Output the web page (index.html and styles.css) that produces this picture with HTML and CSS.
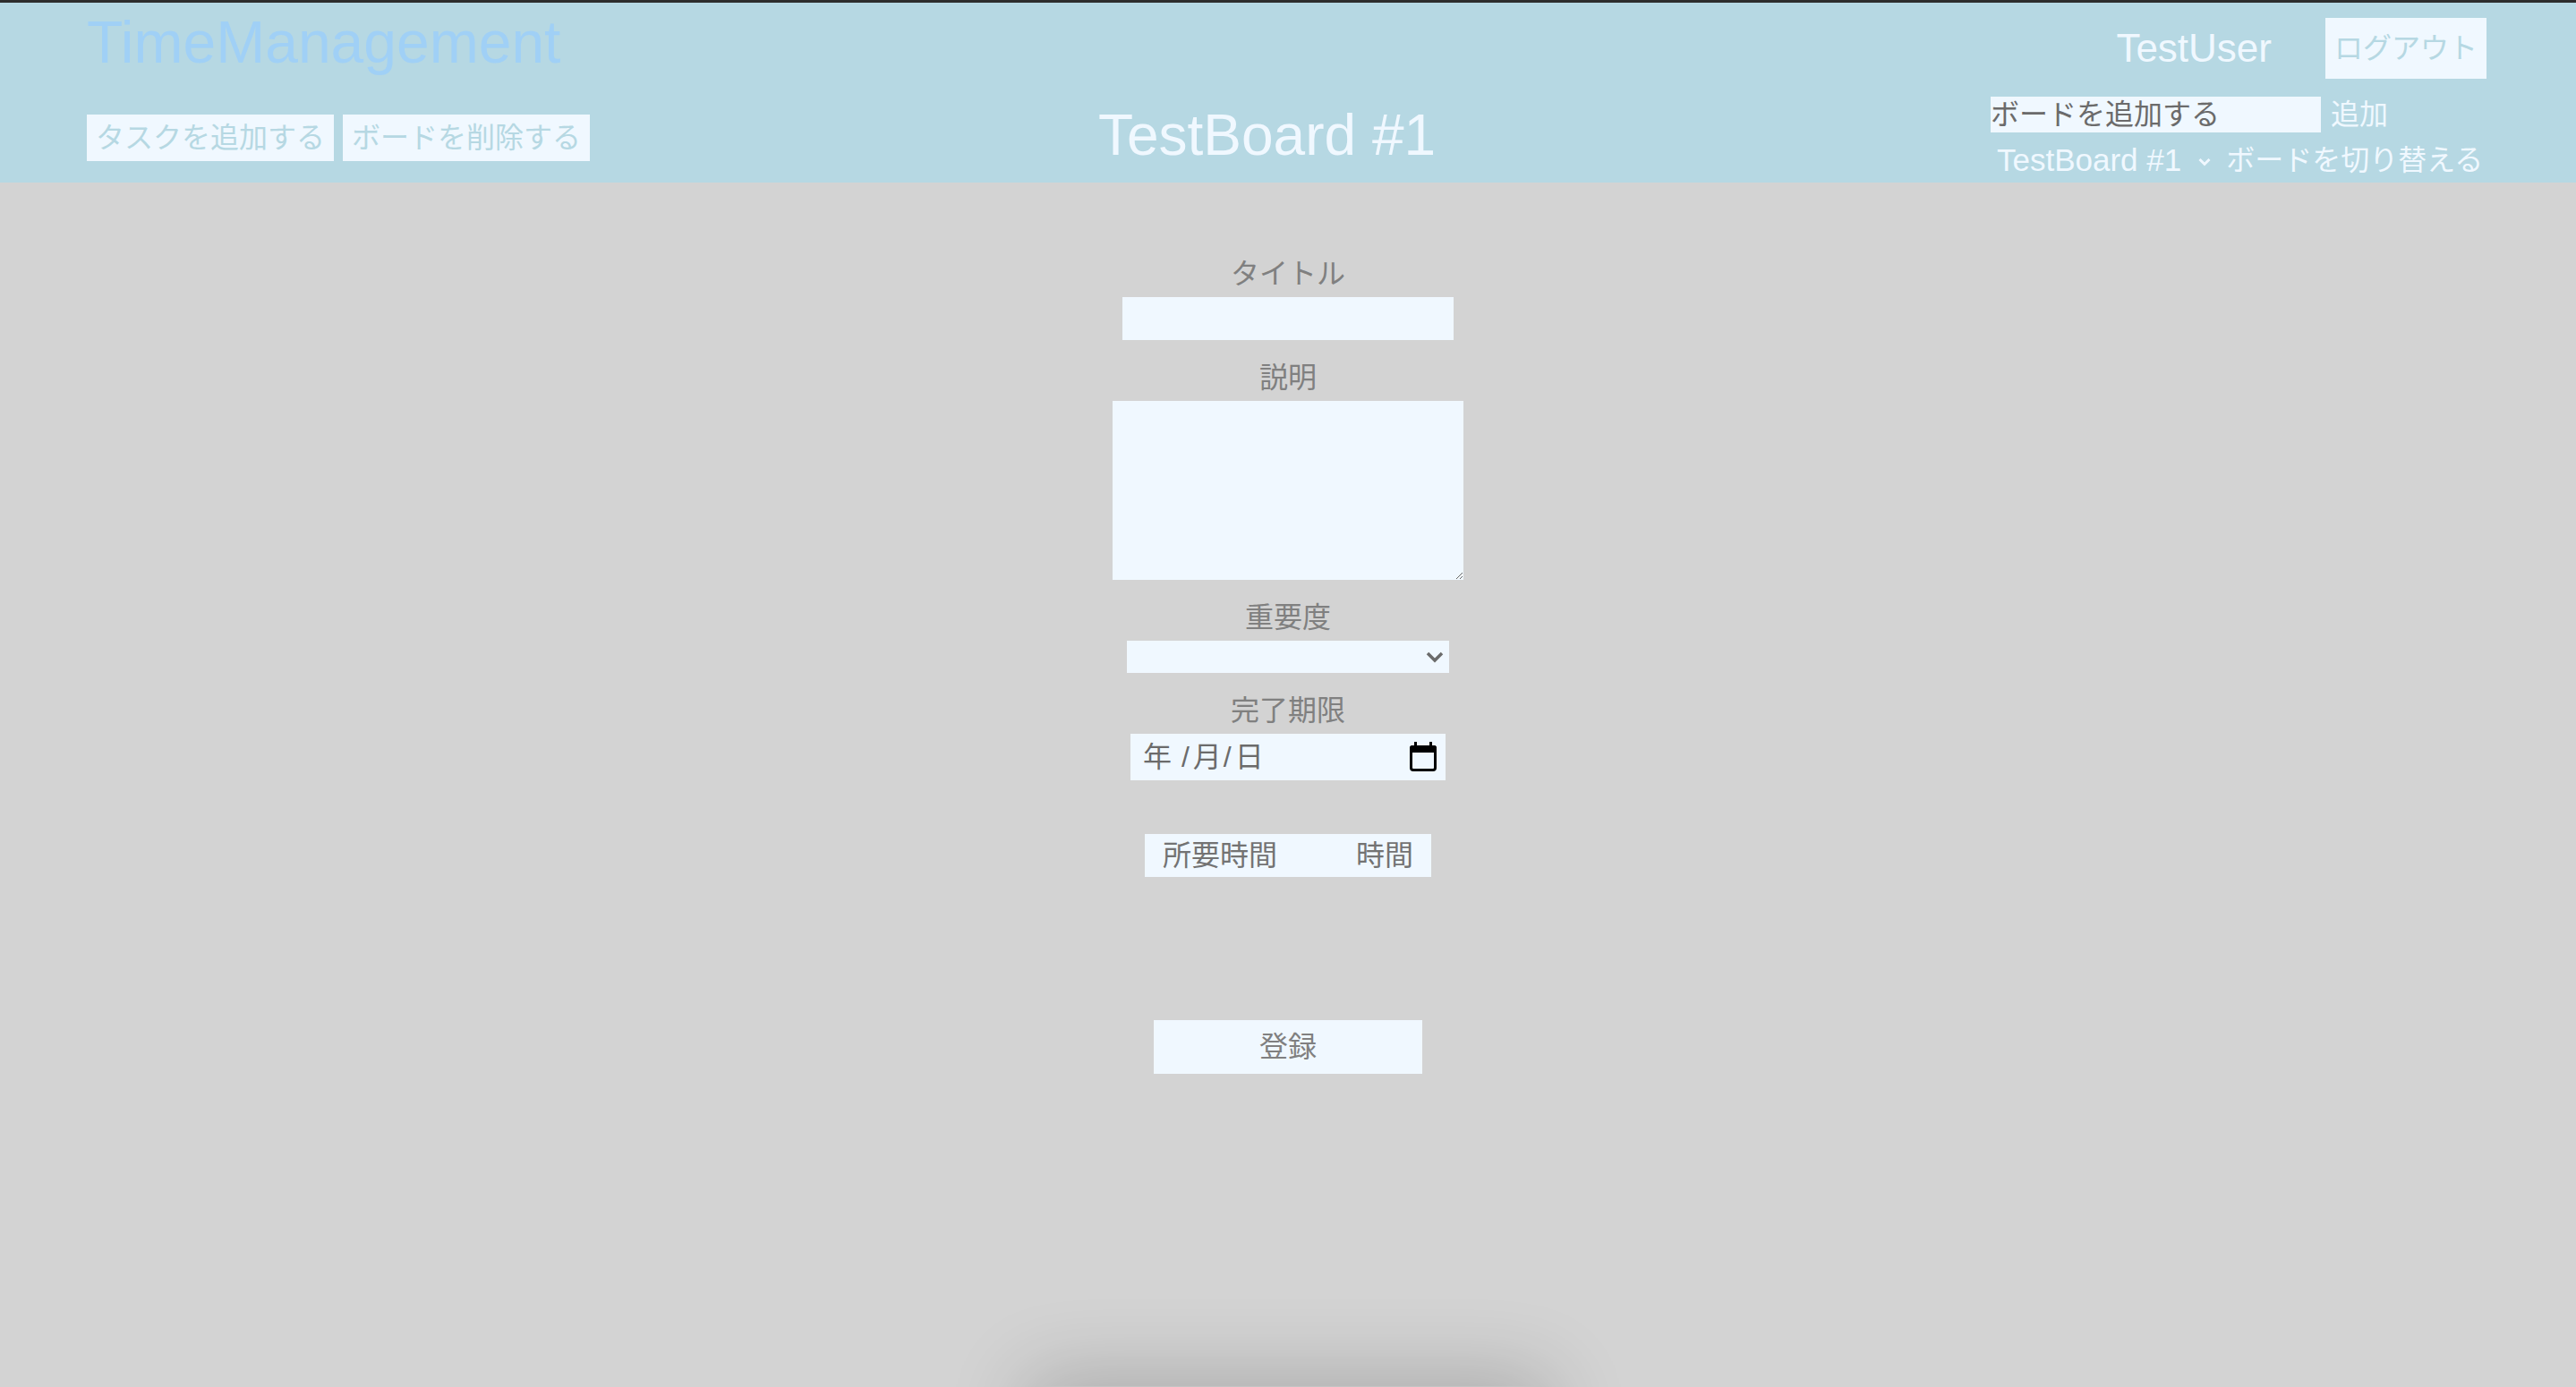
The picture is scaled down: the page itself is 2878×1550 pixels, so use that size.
FILE: index.html
```html
<!DOCTYPE html>
<html lang="ja">
<head>
<meta charset="utf-8">
<title>TimeManagement</title>
<link rel="stylesheet" href="styles.css">
</head>
<body>
<header class="header">
  <div class="brand-col">
    <h1 class="brand">TimeManagement</h1>
    <div class="actions">
      <button class="hbtn">タスクを追加する</button>
      <button class="hbtn">ボードを削除する</button>
    </div>
  </div>
  <h2 class="board-name">TestBoard #1</h2>
  <div class="user-col">
    <div class="user-row">
      <span class="user-name">TestUser</span>
      <button class="hbtn logout">ログアウト</button>
    </div>
    <div class="add-row">
      <input class="board-input" type="text" placeholder="ボードを追加する">
      <button class="link-btn add-btn">追加</button>
    </div>
    <div class="switch-row">
      <div class="board-select">
        <span class="board-select-text">TestBoard #1</span>
        <svg class="board-select-chev" width="14" height="10" viewBox="0 0 14 10"><path d="M1.5 2 L7 7.5 L12.5 2" fill="none" stroke="#f0f8ff" stroke-width="3"/></svg>
      </div>
      <button class="link-btn switch-btn">ボードを切り替える</button>
    </div>
  </div>
</header>

<main class="form">
  <div class="field">
    <label class="field-label">タイトル</label>
    <input class="ctl title-input" type="text">
  </div>
  <div class="field">
    <label class="field-label">説明</label>
    <textarea class="ctl desc-input"></textarea>
  </div>
  <div class="field">
    <label class="field-label">重要度</label>
    <div class="select-wrap">
      <select class="ctl prio-select"></select>
      <svg class="select-chev" width="20" height="13" viewBox="0 0 20 13"><path d="M2 2 L10 10 L18 2" fill="none" stroke="#6b6b6b" stroke-width="3.5"/></svg>
    </div>
  </div>
  <div class="field">
    <label class="field-label">完了期限</label>
    <div class="ctl date-input">
      <span class="date-text"><span class="date-part">年</span> <span class="date-sep">/</span><span class="date-part">月</span><span class="date-sep">/</span><span class="date-part">日</span></span>
      <svg class="cal-icon" width="30" height="33" viewBox="0 0 30 33">
        <rect x="1.5" y="5.5" width="27" height="26" rx="2.5" fill="none" stroke="#000" stroke-width="3"/>
        <rect x="0" y="4" width="30" height="8" rx="2.5" fill="#000"/>
        <rect x="5" y="0" width="3" height="6" fill="#000"/>
        <rect x="22" y="0" width="3" height="6" fill="#000"/>
      </svg>
    </div>
  </div>
  <div class="duration">
    <span class="dur-label">所要時間</span>
    <input class="dur-input" type="number">
    <span class="dur-unit">時間</span>
  </div>
  <button class="submit">登録</button>
</main>

<div class="bottom-sheet"></div>
</body>
</html>
```

FILE: styles.css
```css
html, body {
  margin: 0;
  padding: 0;
  height: 100%;
  overflow: hidden;
}

body {
  background: #d3d3d3;
  font-family: "Liberation Sans", "Noto Sans CJK JP", sans-serif;
}

button, input, textarea, select {
  font-family: "Liberation Sans", "Noto Sans CJK JP", sans-serif;
}

/* ---------- header ---------- */
.header {
  box-sizing: border-box;
  height: 204px;
  border-top: 3px solid #2d2d2d;
  background: #b6d8e3;
  display: flex;
  justify-content: space-between;
  padding: 0 100px 0 97px;
}

.brand-col {
  display: flex;
  flex-direction: column;
  align-items: flex-start;
}

.brand {
  margin: 11px 0 0;
  font-size: 66px;
  line-height: 66px;
  font-weight: normal;
  color: #a0d0f6;
}

.actions {
  margin-top: 48px;
  display: flex;
  gap: 10px;
}

.hbtn {
  border: none;
  background: #f0f8ff;
  color: #b6d8e3;
  font-size: 32px;
  line-height: 32px;
  padding: 10px 10px;
  margin: 0;
}

.board-name {
  align-self: flex-end;
  margin: 0 52px 21px 0;
  font-size: 64px;
  line-height: 64px;
  font-weight: normal;
  color: #f0f8ff;
  white-space: nowrap;
}

.user-col {
  width: 554px;
  padding-top: 17px;
  display: flex;
  flex-direction: column;
}

.user-row {
  display: flex;
  justify-content: flex-end;
  align-items: center;
  gap: 60px;
}

.user-name {
  font-size: 44px;
  line-height: 44px;
  color: #f0f8ff;
}

.logout {
  padding: 18px 10px;
}

.add-row {
  margin-top: 20px;
  display: flex;
  align-items: center;
}

.board-input {
  box-sizing: border-box;
  width: 369px;
  height: 40px;
  border: none;
  outline: none;
  padding: 0;
  margin: 0;
  background: #f0f8ff;
  color: #6b6b6b;
  font-size: 32px;
}

.board-input::placeholder {
  color: #6b6b6b;
  opacity: 1;
}

.link-btn {
  border: none;
  background: transparent;
  color: #f0f8ff;
  font-size: 32px;
  line-height: 40px;
  padding: 0;
  margin: 0;
}

.add-btn {
  margin-left: 11px;
}

.switch-row {
  margin-top: 11px;
  display: flex;
  align-items: center;
  height: 40px;
}

.board-select {
  display: flex;
  align-items: center;
  padding-left: 7px;
  color: #f0f8ff;
}

.board-select-text {
  font-size: 35px;
  line-height: 40px;
  white-space: nowrap;
}

.board-select-chev {
  margin-left: 19px;
  margin-top: 4px;
}

.switch-btn {
  margin-left: 17px;
}

/* ---------- form ---------- */
.form {
  display: flex;
  flex-direction: column;
  align-items: center;
  padding-top: 82px;
}

.field {
  display: flex;
  flex-direction: column;
  align-items: center;
  margin-bottom: 22px;
}

.field-label {
  font-size: 32px;
  line-height: 40px;
  color: #808080;
  margin-bottom: 6px;
}

.ctl {
  box-sizing: border-box;
  border: none;
  outline: none;
  margin: 0;
  background: #f0f8ff;
  color: #6b6b6b;
  font-size: 32px;
}

.title-input {
  width: 370px;
  height: 48px;
  padding: 0 8px;
}

.desc-input {
  width: 392px;
  height: 200px;
  padding: 4px;
  display: block;
}

.select-wrap {
  position: relative;
  width: 360px;
  height: 36px;
}

.prio-select {
  appearance: none;
  -webkit-appearance: none;
  width: 360px;
  height: 36px;
  border-radius: 0;
  padding: 0 8px;
}

.select-chev {
  position: absolute;
  right: 6px;
  top: 12px;
  pointer-events: none;
}

.date-input {
  width: 352px;
  height: 52px;
  display: flex;
  align-items: center;
  justify-content: space-between;
  padding: 0 10px 0 14px;
}

.date-text {
  font-size: 32px;
  line-height: 40px;
  color: #6b6b6b;
  white-space: pre;
}

.date-sep {
  margin: 0 4px 0 2px;
}

.cal-icon {
  display: block;
  margin-top: -2px;
}

.duration {
  box-sizing: border-box;
  margin-top: 38px;
  width: 320px;
  height: 48px;
  background: #f0f8ff;
  display: flex;
  align-items: center;
  padding: 0 20px;
  color: #737373;
  font-size: 32px;
  line-height: 40px;
}

.dur-input {
  width: 88px;
  height: 40px;
  border: none;
  outline: none;
  background: transparent;
  padding: 0;
  margin: 0;
  -moz-appearance: textfield;
}

.dur-input::-webkit-inner-spin-button,
.dur-input::-webkit-outer-spin-button {
  -webkit-appearance: none;
  margin: 0;
}

.submit {
  margin-top: 160px;
  width: 300px;
  height: 60px;
  border: none;
  background: #f0f8ff;
  color: #808080;
  font-size: 32px;
  line-height: 40px;
  padding: 0;
}

/* shadow of a panel sitting just below the visible area */
.bottom-sheet {
  position: fixed;
  bottom: -80px;
  left: calc(50% - 281px);
  width: 563px;
  height: 81px;
  background: #c4c4c4;
  box-shadow: 0 0 90px 10px rgba(0, 0, 0, 0.2);
}
```
